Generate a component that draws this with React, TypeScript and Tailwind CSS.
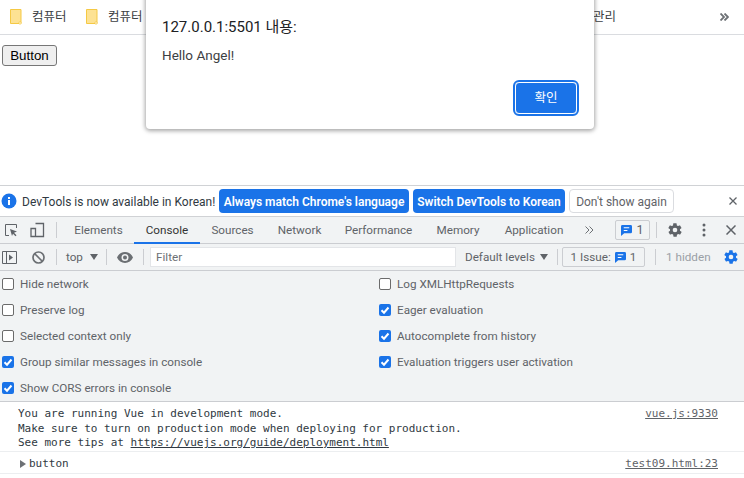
import React from 'react';

const ui = "font-['Roboto','Noto_Sans_CJK_KR',sans-serif]";

const Folder = () => (
  <svg width="12" height="16" viewBox="0 0 12 16" className="shrink-0">
    <path d="M.5.5h10.5v14H.5z" fill="#fde293" stroke="#f5c944" />
    <path d="M9 13h2v2H9z" fill="#fff" stroke="#f5c944" strokeWidth=".7" />
  </svg>
);

const Gear = ({ color }: { color: string }) => (
  <svg width="16" height="16" viewBox="0 0 24 24" fill={color} className="shrink-0">
    <path d="M19.4 13c.1-.3.1-.7.1-1s0-.7-.1-1l2.1-1.6c.2-.1.2-.4.1-.6l-2-3.5c-.1-.2-.4-.3-.6-.2l-2.5 1c-.5-.4-1.1-.7-1.7-1l-.4-2.6c0-.3-.2-.5-.5-.5h-4c-.3 0-.5.2-.5.4l-.4 2.7c-.6.2-1.1.6-1.7 1l-2.5-1c-.2-.1-.5 0-.6.2l-2 3.5c-.1.2-.1.5.1.6L4.6 11c0 .3-.1.7-.1 1s0 .7.1 1l-2.1 1.6c-.2.2-.2.4-.1.6l2 3.5c.1.2.4.3.6.2l2.5-1c.5.4 1.1.7 1.7 1l.4 2.6c0 .3.2.5.5.5h4c.3 0 .5-.2.5-.4l.4-2.7c.6-.2 1.2-.6 1.7-1l2.5 1c.2.1.5 0 .6-.2l2-3.5c.1-.2.1-.5-.1-.6L19.4 13zM12 15.500a3.500 3.500 0 1 1 0-7 3.500 3.500 0 0 1 0 7z" />
  </svg>
);

const Chat = () => (
  <svg width="11" height="11" viewBox="0 0 12 12" className="shrink-0">
    <path d="M1.500 0h9A1.500 1.500 0 0 1 12 1.500v6A1.500 1.500 0 0 1 10.500 9H3.500L0 12V1.500A1.500 1.500 0 0 1 1.500 0z" fill="#1a73e8" />
    <path d="M3 3h6M3 6h4" stroke="#fff" strokeWidth="1.200" />
  </svg>
);

const Caret = () => (
  <svg width="8" height="6" viewBox="0 0 8 6" className="shrink-0">
    <path d="M0 0h8L4 6z" fill="#5f6368" />
  </svg>
);

const Chevrons = ({ className, sw }: { className: string; sw: string }) => (
  <svg width="9" height="8" viewBox="0 0 9 8" className={`shrink-0 ${className}`}>
    <path d="M.5.500 4 4 .5 7.500M4.500.500 8 4 4.500 7.500" fill="none" stroke="#6d7175" strokeWidth={sw} />
  </svg>
);

const Divider = ({ className }: { className: string }) => <div className={`w-px h-4 bg-[#cbcdd1] shrink-0 ${className}`}></div>;

const Check = ({ label, on }: { label: string; on?: boolean }) => (
  <div className="h-[26px] flex items-center pl-[2px]">
    {on ? (
      <svg width="12" height="12" viewBox="0 0 12 12" className="shrink-0">
        <rect width="12" height="12" rx="2" fill="#1a73e8" />
        <path d="M2.500 6.200 5 8.700l4.500-5.200" fill="none" stroke="#fff" strokeWidth="2" />
      </svg>
    ) : (
      <div className="w-3 h-3 rounded-[2px] border border-[#6b6b6b] bg-white shrink-0"></div>
    )}
    <span className="ml-[6px] pt-[2px] text-[11.700px] text-[#5f6368]">{label}</span>
  </div>
);

const tabs = [
  { name: 'Elements', w: 'w-[71px]' },
  { name: 'Console', w: 'w-[66px]', active: true },
  { name: 'Sources', w: 'w-[65px]' },
  { name: 'Network', w: 'w-[69px]' },
  { name: 'Performance', w: 'w-[89px]' },
  { name: 'Memory', w: 'w-[70px]' },
  { name: 'Application', w: 'w-[82px]' },
];

export default function App() {
  return (
    <div className={`relative w-[744px] h-[478px] overflow-hidden bg-white ${ui}`}>
      {/* bookmarks bar */}
      <div className="h-[35px] border-b border-[#dadce0] flex items-center text-[12.500px] text-[#3c4043]">
        <div className="ml-[10px]"><Folder /></div>
        <span className="ml-[10px] w-[35px] whitespace-nowrap">컴퓨터</span>
        <div className="ml-[19px]"><Folder /></div>
        <span className="ml-[10px] w-[35px] whitespace-nowrap">컴퓨터</span>
        <span className="ml-[450px]">관리</span>
        <Chevrons className="ml-auto mr-[15px]" sw="1.800" />
      </div>

      {/* page */}
      <div className="h-[150px] pt-[10px] pl-[2px]">
        <button className="block w-[55px] h-[21px] border border-[#767676] rounded-[3px] bg-[#efefef] text-[13.330px] text-black font-['Liberation_Sans',sans-serif] leading-none">Button</button>
      </div>

      {/* infobar */}
      <div className="h-[32px] border-t border-b border-[#d0d2d5] flex items-center text-[12px]">
        <svg width="16" height="16" viewBox="0 0 16 16" className="ml-px shrink-0">
          <circle cx="8" cy="8" r="7.500" fill="#1a73e8" />
          <rect x="7" y="7" width="2" height="5" fill="#fff" />
          <rect x="7" y="4" width="2" height="2" fill="#fff" />
        </svg>
        <span className="ml-[5px] w-[197px] pt-px text-[#303942] whitespace-nowrap">DevTools is now available in Korean!</span>
        <div className="w-[190px] h-6 pt-px rounded-[4px] bg-[#1a73e8] text-white font-semibold flex items-center justify-center whitespace-nowrap">Always match Chrome's language</div>
        <div className="ml-1 w-[152px] h-6 pt-px rounded-[4px] bg-[#1a73e8] text-white font-semibold flex items-center justify-center whitespace-nowrap">Switch DevTools to Korean</div>
        <div className="ml-1 w-[105px] h-6 pt-px rounded-[4px] border border-[#dadce0] text-[#5f6368] flex items-center justify-center whitespace-nowrap">Don't show again</div>
        <svg width="8" height="8" viewBox="0 0 8 8" className="ml-[55px] shrink-0">
          <path d="M.5.5l7 7M7.500.5l-7 7" stroke="#5f6368" strokeWidth="1.300" />
        </svg>
      </div>

      {/* tabs */}
      <div className="h-[27px] bg-[#f1f3f4] border-b border-[#cbcdd1] flex items-center text-[11.700px] text-[#5f6368]">
        <svg width="14" height="14" viewBox="0 0 14 14" className="ml-1 shrink-0">
          <path d="M5 12.500H1.500v-11h11V5" fill="none" stroke="#5f6368" />
          <path d="M6 6l7 2.500-3 1.200 2.500 2.500-1 1-2.500-2.500L8 13z" fill="#5f6368" />
        </svg>
        <svg width="15" height="16" viewBox="0 0 15 16" className="ml-[12px] shrink-0">
          <path d="M5.500 1.500h8v13h-8M1 6.500h4.500v8H1z" fill="none" stroke="#5f6368" strokeWidth="1.300" />
        </svg>
        <Divider className="ml-[11px]" />
        <div className="ml-[6px] flex h-full">
          {tabs.map((t) => (
            <div key={t.name} className={`${t.w} pt-[3px] flex items-center justify-center whitespace-nowrap border-b-2 -mb-px ${t.active ? 'border-[#1a73e8] text-[#333]' : 'border-transparent'}`}>{t.name}</div>
          ))}
        </div>
        <Chevrons className="ml-[10px]" sw="1" />
        <div className="ml-[21px] w-[35px] h-[20px] rounded-[2px] border border-[#cbcdd1] flex items-center justify-center gap-1 shrink-0">
          <Chat /><span className="text-[12.500px]">1</span>
        </div>
        <Divider className="ml-[6px]" />
        <div className="ml-[10px]"><Gear color="#5f6368" /></div>
        <svg width="4" height="14" viewBox="0 0 4 14" className="ml-[19px] shrink-0">
          <circle cx="2" cy="2" r="1.500" fill="#5f6368" /><circle cx="2" cy="7" r="1.500" fill="#5f6368" /><circle cx="2" cy="12" r="1.500" fill="#5f6368" />
        </svg>
        <svg width="10" height="10" viewBox="0 0 10 10" className="ml-[20px] shrink-0">
          <path d="M.5.5l9 9M9.500.5l-9 9" stroke="#5f6368" strokeWidth="1.500" />
        </svg>
      </div>

      {/* console toolbar */}
      <div className="h-[27px] bg-[#f1f3f4] border-b border-[#cbcdd1] flex items-center text-[11.700px] text-[#5f6368]">
        <svg width="15" height="13" viewBox="0 0 15 13" className="ml-[2px] shrink-0">
          <path d="M.5.500h14v12H.5zM4.500.500v12" fill="none" stroke="#5f6368" />
          <path d="M7 3.500l4 3-4 3z" fill="#5f6368" />
        </svg>
        <svg width="13" height="13" viewBox="0 0 13 13" className="ml-[15px] shrink-0">
          <circle cx="6.500" cy="6.500" r="5.500" fill="none" stroke="#6b6f73" strokeWidth="1.700" />
          <path d="M2.500 2.500l8 8" stroke="#6b6f73" strokeWidth="1.700" />
        </svg>
        <Divider className="ml-[11px]" />
        <span className="ml-[9px] pt-[2px] w-[17px]">top</span>
        <div className="ml-[7px]"><Caret /></div>
        <Divider className="ml-[8px]" />
        <svg width="16" height="11" viewBox="0 0 16 11" className="ml-[10px] shrink-0">
          <path d="M8 0C4.500 0 1.500 2.200 0 5.500 1.500 8.800 4.500 11 8 11s6.500-2.200 8-5.500C14.500 2.200 11.500 0 8 0zm0 9a3.500 3.500 0 1 1 0-7 3.500 3.500 0 0 1 0 7z" fill="#6b6f73" />
          <circle cx="8" cy="5.500" r="2" fill="#6b6f73" />
        </svg>
        <Divider className="ml-[10px]" />
        <div className="ml-[6px] w-[306px] h-[20px] pt-[2px] bg-white border border-[#e3e5e8] flex items-center pl-[5px] text-[#6d7175] shrink-0">Filter</div>
        <span className="ml-[9px] pt-[2px] w-[70px] whitespace-nowrap">Default levels</span>
        <div className="ml-[5px]"><Caret /></div>
        <Divider className="ml-[9px]" />
        <div className="ml-[4px] w-[83px] h-[20px] pt-px rounded-[2px] border border-[#cbcdd1] flex items-center justify-center gap-1 whitespace-nowrap shrink-0">
          <span>1 Issue:</span><Chat /><span>1</span>
        </div>
        <Divider className="ml-[10px]" />
        <span className="ml-[10px] pt-[2px] w-[46px] text-[#9aa0a6] whitespace-nowrap">1 hidden</span>
        <div className="ml-[11px]"><Gear color="#1a73e8" /></div>
      </div>

      {/* settings */}
      <div className="h-[131px] bg-[#f1f3f4] border-b border-[#cbcdd1] grid grid-cols-[377px_1fr]">
        <div>
          <Check label="Hide network" />
          <Check label="Preserve log" />
          <Check label="Selected context only" />
          <Check label="Group similar messages in console" on />
          <Check label="Show CORS errors in console" on />
        </div>
        <div>
          <Check label="Log XMLHttpRequests" />
          <Check label="Eager evaluation" on />
          <Check label="Autocomplete from history" on />
          <Check label="Evaluation triggers user activation" on />
        </div>
      </div>

      {/* console */}
      <div className="font-['DejaVu_Sans_Mono',monospace] text-[11px] text-[#303942]">
        <div className="h-[50px] border-b border-[#eceef0] pl-[18px] pr-[26px] pt-[5px] leading-[14.500px] flex justify-between">
          <div className="whitespace-pre">
            You are running Vue in development mode.{'\n'}Make sure to turn on production mode when deploying for production.{'\n'}See more tips at <span className="underline">https://vuejs.org/guide/deployment.html</span>
          </div>
          <span className="underline text-[#5f6368]">vue.js:9330</span>
        </div>
        <div className="h-[22px] border-b border-[#eceef0] pl-[20px] pr-[26px] pt-[3px] flex items-center">
          <svg width="6" height="8" viewBox="0 0 6 8" className="shrink-0"><path d="M0 0l6 4-6 4z" fill="#6d7175" /></svg>
          <span className="ml-[3px]">button</span>
          <span className="ml-auto underline text-[#5f6368]">test09.html:23</span>
        </div>
      </div>

      {/* alert */}
      <div className="absolute left-[146px] top-[-10px] w-[448px] h-[139px] bg-white rounded-[4px] shadow-[0_1px_4px_1px_rgba(0,0,0,0.35)] flex flex-col pl-[16px] pr-[17px]">
        <div className="mt-[27px] text-[15px] leading-[20px] text-[#202124]">127.0.0.1:5501 내용:</div>
        <div className="mt-[10px] text-[13.500px] leading-[16px] text-[#3c4043]">Hello Angel!</div>
        <div className="mt-auto mb-[15px] ml-auto w-[62px] h-[32px] rounded-[4px] bg-[#1a73e8] border border-white outline-2 outline-[#1a73e8] text-white text-[12.500px] flex items-center justify-center">확인</div>
      </div>
    </div>
  );
}
